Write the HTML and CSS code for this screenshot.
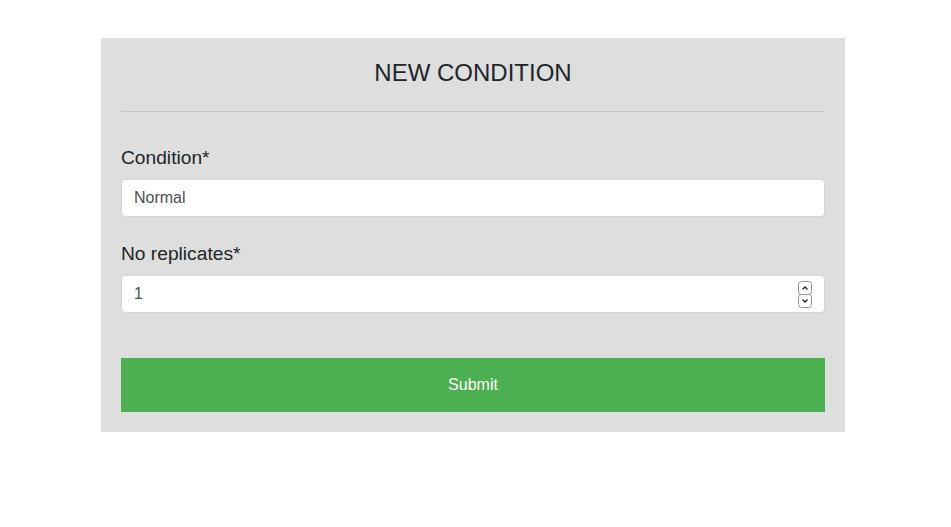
FILE: index.html
```html
<!DOCTYPE html>
<html lang="en">
<head>
<meta charset="utf-8">
<title>New condition</title>
<link rel="stylesheet" href="styles.css">
</head>
<body>
<div class="card">
  <h1 class="title">NEW CONDITION</h1>
  <hr class="divider">
  <form class="form">
    <div class="group">
      <label class="label" for="cond">Condition*</label>
      <input class="control" id="cond" type="text" value="Normal">
    </div>
    <div class="group">
      <label class="label" for="rep">No replicates*</label>
      <div class="number-wrap">
        <input class="control number" id="rep" type="number" value="1">
        <svg class="spinner" width="14" height="27" viewBox="0 0 14 27" aria-hidden="true">
          <rect x="0.5" y="0.5" width="13" height="13" rx="3" fill="#fff" stroke="#8f8f8f"/>
          <rect x="0.5" y="13.5" width="13" height="13" rx="3" fill="#fff" stroke="#8f8f8f"/>
          <path d="M4.5 8.5 L7 6 L9.5 8.5" fill="none" stroke="#222" stroke-width="1.3"/>
          <path d="M4.5 18.5 L7 21 L9.5 18.5" fill="none" stroke="#222" stroke-width="1.3"/>
        </svg>
      </div>
    </div>
    <button class="submit" type="button">Submit</button>
  </form>
</div>
</body>
</html>
```
FILE: styles.css
```css
* { box-sizing: border-box; }
html, body { margin: 0; padding: 0; background: #fff; }
body {
  font-family: "Liberation Sans", Arial, sans-serif;
  color: #212529;
  padding-top: 38px;
}
.card {
  width: 744px;
  margin-left: 101px;
  background: #dddedd;
  padding: 20px 20px 20px;
}
.title {
  margin: 0;
  font-size: 24px;
  font-weight: 400;
  line-height: 29px;
  text-align: center;
  color: #212529;
}
.divider {
  margin: 24px 0 0;
  border: 0;
  border-top: 1px solid rgba(0,0,0,0.1);
  height: 0;
}
.form { padding-top: 30px; }
.group { margin-bottom: 21px; }
.group:last-of-type { margin-bottom: 0; }
.label {
  display: block;
  font-size: 19.2px;
  line-height: 28.8px;
  padding-top: 2px;
  margin-bottom: 6px;
  color: #212529;
}
.control {
  display: block;
  width: 100%;
  height: 38px;
  padding: 6px 12px;
  font-family: "Liberation Sans", Arial, sans-serif;
  font-size: 16px;
  line-height: 24px;
  color: #495057;
  background: #fff;
  border: 1px solid #ced4da;
  border-radius: 4px;
  outline: none;
}
.number-wrap { position: relative; }
.number { -moz-appearance: textfield; appearance: textfield; }
.number::-webkit-inner-spin-button,
.number::-webkit-outer-spin-button { -webkit-appearance: none; margin: 0; }
.spinner {
  position: absolute;
  right: 13px;
  top: 6px;
}
.submit {
  display: block;
  width: 100%;
  height: 54px;
  margin-top: 45px;
  border: 0;
  border-radius: 0;
  background: #4caf50;
  color: #fff;
  font-family: "Liberation Sans", Arial, sans-serif;
  font-size: 16px;
}
```
